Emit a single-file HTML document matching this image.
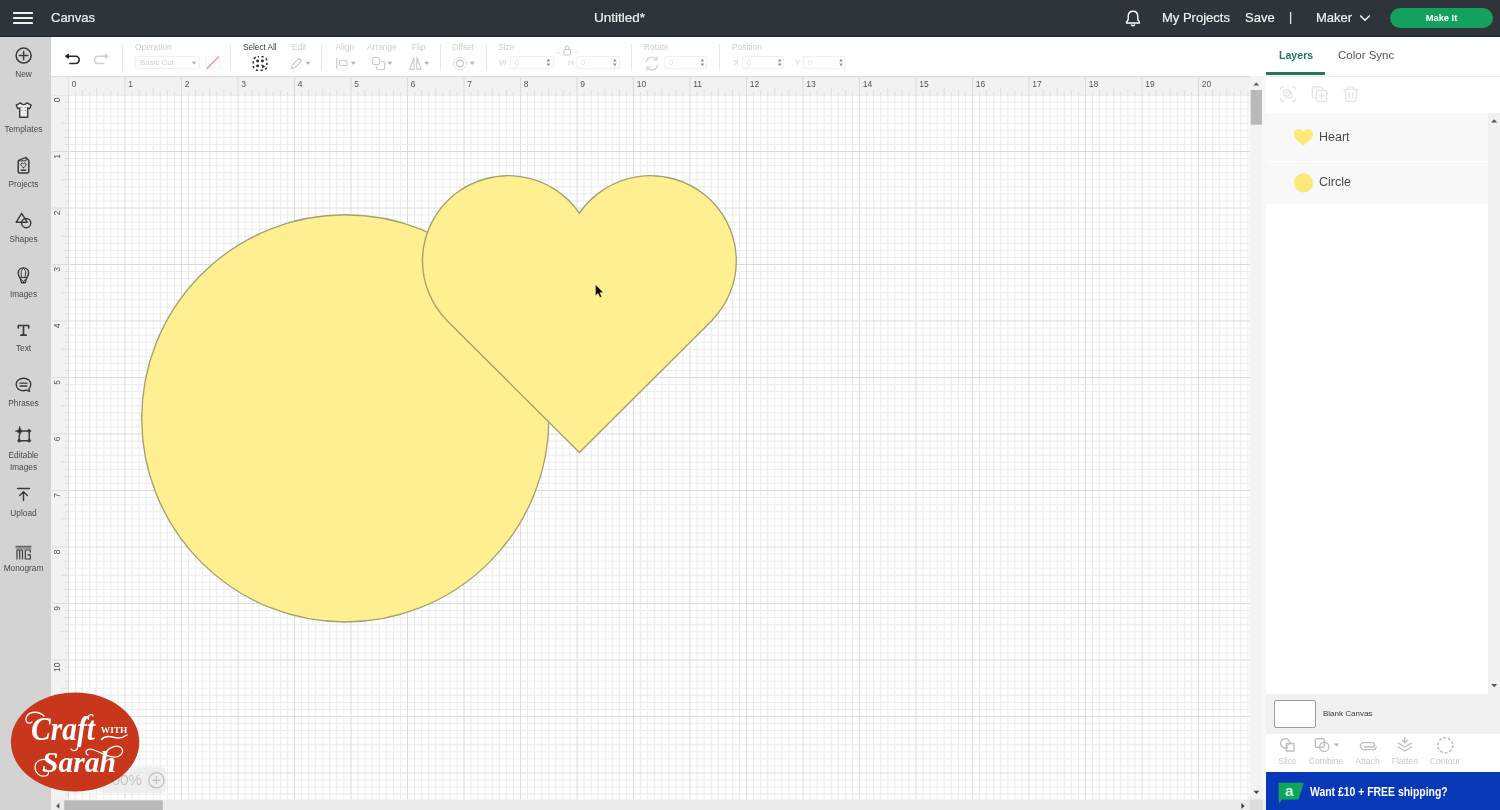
<!DOCTYPE html>
<html lang="en">
<head>
<meta charset="utf-8">
<title>Cricut Design Space - Canvas</title>
<style>
*{box-sizing:border-box;margin:0;padding:0}
html,body{width:1500px;height:810px;overflow:hidden;background:#fff;font-family:"Liberation Sans",sans-serif;}
#app{will-change:transform;position:relative;width:1500px;height:810px;overflow:hidden;background:#fff}
.abs{position:absolute}
#topbar{left:0;top:0;width:1500px;height:37.500px;background:#2f333a;color:#fff;border-bottom:2.500px solid #212328}
#topbar .t{-webkit-text-stroke:.2px #f1f1f2;position:absolute;top:0;height:36px;line-height:35.500px;font-size:13px;color:#f1f1f2;white-space:nowrap}
#makeit{position:absolute;left:1390px;top:8.300px;width:103px;height:20px;border-radius:10px;background:#14a05e;color:#fff;font-size:9.300px;font-weight:bold;text-align:center;line-height:20px}
#sidebar{left:0;top:37px;width:51px;height:773px;background:#d3d3d3}
.sb{position:absolute;left:0;width:47px;text-align:center;font-size:8.300px;color:#4a4a4a;line-height:12px}
.sbi{position:absolute;left:13px;width:21px;height:21px}
#toolbar{left:51px;top:37px;width:1215px;height:39px;background:#fff}
.tl{position:absolute;margin-top:.400px;top:6px;font-size:8.4px;color:#cfcfcf;white-space:nowrap;line-height:9px}
.sep{position:absolute;top:44px;width:1px;height:27px;background:#e6e6e6}
.inp{position:absolute;top:56px;height:13px;border:1px solid #f0f0f0;border-radius:2px;background:#fff}
.inl{position:absolute;top:58px;font-size:7.9px;color:#cfcfcf;line-height:9px}
#rulers{left:0;top:0;width:1500px;height:810px;pointer-events:none}
#panel{left:1266px;top:37px;width:234px;height:773px;background:#fff}
.lyr{position:absolute;left:0;width:222px;background:#f8f8f8}
.lyr span{position:absolute;left:53px;font-size:12.500px;color:#4a4a4a;line-height:16px}
.act{position:absolute;top:756.300px;font-size:8.600px;color:#c9c9c9;text-align:center;width:44px;line-height:10px}
</style>
</head>
<body>
<div id="app">

<!-- canvas + rulers + shapes (single svg) -->
<svg id="rulers" class="abs" width="1500" height="810" viewBox="0 0 1500 810" font-family="Liberation Sans, sans-serif">
<rect x="51" y="76" width="1215" height="734" fill="#fff"/>
<path d="M75.56 94V799.5M82.62 94V799.5M89.69 94V799.5M96.75 94V799.5M103.81 94V799.5M110.88 94V799.5M117.94 94V799.5M132.06 94V799.5M139.12 94V799.5M146.19 94V799.5M153.25 94V799.5M160.31 94V799.5M167.38 94V799.5M174.44 94V799.5M188.56 94V799.5M195.62 94V799.5M202.69 94V799.5M209.75 94V799.5M216.81 94V799.5M223.88 94V799.5M230.94 94V799.5M245.06 94V799.5M252.12 94V799.5M259.19 94V799.5M266.25 94V799.5M273.31 94V799.5M280.38 94V799.5M287.44 94V799.5M301.56 94V799.5M308.62 94V799.5M315.69 94V799.5M322.75 94V799.5M329.81 94V799.5M336.88 94V799.5M343.94 94V799.5M358.06 94V799.5M365.12 94V799.5M372.19 94V799.5M379.25 94V799.5M386.31 94V799.5M393.38 94V799.5M400.44 94V799.5M414.56 94V799.5M421.62 94V799.5M428.69 94V799.5M435.75 94V799.5M442.81 94V799.5M449.88 94V799.5M456.94 94V799.5M471.06 94V799.5M478.12 94V799.5M485.19 94V799.5M492.25 94V799.5M499.31 94V799.5M506.38 94V799.5M513.44 94V799.5M527.56 94V799.5M534.62 94V799.5M541.69 94V799.5M548.75 94V799.5M555.81 94V799.5M562.88 94V799.5M569.94 94V799.5M584.06 94V799.5M591.12 94V799.5M598.19 94V799.5M605.25 94V799.5M612.31 94V799.5M619.38 94V799.5M626.44 94V799.5M640.56 94V799.5M647.62 94V799.5M654.69 94V799.5M661.75 94V799.5M668.81 94V799.5M675.88 94V799.5M682.94 94V799.5M697.06 94V799.5M704.12 94V799.5M711.19 94V799.5M718.25 94V799.5M725.31 94V799.5M732.38 94V799.5M739.44 94V799.5M753.56 94V799.5M760.62 94V799.5M767.69 94V799.5M774.75 94V799.5M781.81 94V799.5M788.88 94V799.5M795.94 94V799.5M810.06 94V799.5M817.12 94V799.5M824.19 94V799.5M831.25 94V799.5M838.31 94V799.5M845.38 94V799.5M852.44 94V799.5M866.56 94V799.5M873.62 94V799.5M880.69 94V799.5M887.75 94V799.5M894.81 94V799.5M901.88 94V799.5M908.94 94V799.5M923.06 94V799.5M930.12 94V799.5M937.19 94V799.5M944.25 94V799.5M951.31 94V799.5M958.38 94V799.5M965.44 94V799.5M979.56 94V799.5M986.62 94V799.5M993.69 94V799.5M1000.75 94V799.5M1007.81 94V799.5M1014.88 94V799.5M1021.94 94V799.5M1036.06 94V799.5M1043.12 94V799.5M1050.19 94V799.5M1057.25 94V799.5M1064.31 94V799.5M1071.38 94V799.5M1078.44 94V799.5M1092.56 94V799.5M1099.62 94V799.5M1106.69 94V799.5M1113.75 94V799.5M1120.81 94V799.5M1127.88 94V799.5M1134.94 94V799.5M1149.06 94V799.5M1156.12 94V799.5M1163.19 94V799.5M1170.25 94V799.5M1177.31 94V799.5M1184.38 94V799.5M1191.44 94V799.5M1205.56 94V799.5M1212.62 94V799.5M1219.69 94V799.5M1226.75 94V799.5M1233.81 94V799.5M1240.88 94V799.5M1247.94 94V799.5M68 102.06H1250M68 109.12H1250M68 116.19H1250M68 123.25H1250M68 130.31H1250M68 137.38H1250M68 144.44H1250M68 158.56H1250M68 165.62H1250M68 172.69H1250M68 179.75H1250M68 186.81H1250M68 193.88H1250M68 200.94H1250M68 215.06H1250M68 222.12H1250M68 229.19H1250M68 236.25H1250M68 243.31H1250M68 250.38H1250M68 257.44H1250M68 271.56H1250M68 278.62H1250M68 285.69H1250M68 292.75H1250M68 299.81H1250M68 306.88H1250M68 313.94H1250M68 328.06H1250M68 335.12H1250M68 342.19H1250M68 349.25H1250M68 356.31H1250M68 363.38H1250M68 370.44H1250M68 384.56H1250M68 391.62H1250M68 398.69H1250M68 405.75H1250M68 412.81H1250M68 419.88H1250M68 426.94H1250M68 441.06H1250M68 448.12H1250M68 455.19H1250M68 462.25H1250M68 469.31H1250M68 476.38H1250M68 483.44H1250M68 497.56H1250M68 504.62H1250M68 511.69H1250M68 518.75H1250M68 525.81H1250M68 532.88H1250M68 539.94H1250M68 554.06H1250M68 561.12H1250M68 568.19H1250M68 575.25H1250M68 582.31H1250M68 589.38H1250M68 596.44H1250M68 610.56H1250M68 617.62H1250M68 624.69H1250M68 631.75H1250M68 638.81H1250M68 645.88H1250M68 652.94H1250M68 667.06H1250M68 674.12H1250M68 681.19H1250M68 688.25H1250M68 695.31H1250M68 702.38H1250M68 709.44H1250M68 723.56H1250M68 730.62H1250M68 737.69H1250M68 744.75H1250M68 751.81H1250M68 758.88H1250M68 765.94H1250M68 780.06H1250M68 787.12H1250M68 794.19H1250" stroke="#ececec" stroke-width="1" fill="none"/>
<path d="M68.50 94V799.5M125.00 94V799.5M181.50 94V799.5M238.00 94V799.5M294.50 94V799.5M351.00 94V799.5M407.50 94V799.5M464.00 94V799.5M520.50 94V799.5M577.00 94V799.5M633.50 94V799.5M690.00 94V799.5M746.50 94V799.5M803.00 94V799.5M859.50 94V799.5M916.00 94V799.5M972.50 94V799.5M1029.00 94V799.5M1085.50 94V799.5M1142.00 94V799.5M1198.50 94V799.5M68 95.00H1250M68 151.50H1250M68 208.00H1250M68 264.50H1250M68 321.00H1250M68 377.50H1250M68 434.00H1250M68 490.50H1250M68 547.00H1250M68 603.50H1250M68 660.00H1250M68 716.50H1250M68 773.00H1250" stroke="#dcdcdc" stroke-width="1" fill="none"/>
<!-- circle -->
<circle cx="345.300" cy="418.400" r="203.600" fill="#feef90" stroke="#a6a06e" stroke-width="1.350"/>
<!-- heart -->
<path d="M579.40 452.52L447.42 320.93A85.8 85.2 0 1 1 579.40 213.21A85.8 85.2 0 1 1 711.38 320.93Z" fill="#feef90" stroke="#a6a06e" stroke-width="1.350" stroke-linejoin="miter"/>
<!-- ruler backgrounds -->
<rect x="51" y="76" width="1199" height="19" fill="#f2f2f2"/>
<rect x="51" y="76" width="17" height="724" fill="#f2f2f2"/>
<rect x="51" y="76" width="1215" height="1.5" fill="#dedede"/>
<line x1="68.5" y1="77" x2="68.5" y2="95" stroke="#dcdcdc" stroke-width="1"/>
<text x="71.7" y="86.8" font-size="8.5" fill="#555">0</text>
<line x1="75.6" y1="92" x2="75.6" y2="95" stroke="#dcdcdc" stroke-width="1"/>
<line x1="82.6" y1="90.5" x2="82.6" y2="95" stroke="#dcdcdc" stroke-width="1"/>
<line x1="89.7" y1="92" x2="89.7" y2="95" stroke="#dcdcdc" stroke-width="1"/>
<line x1="96.8" y1="88" x2="96.8" y2="95" stroke="#dcdcdc" stroke-width="1"/>
<line x1="103.8" y1="92" x2="103.8" y2="95" stroke="#dcdcdc" stroke-width="1"/>
<line x1="110.9" y1="90.5" x2="110.9" y2="95" stroke="#dcdcdc" stroke-width="1"/>
<line x1="117.9" y1="92" x2="117.9" y2="95" stroke="#dcdcdc" stroke-width="1"/>
<line x1="125.0" y1="77" x2="125.0" y2="95" stroke="#dcdcdc" stroke-width="1"/>
<text x="128.2" y="86.8" font-size="8.5" fill="#555">1</text>
<line x1="132.1" y1="92" x2="132.1" y2="95" stroke="#dcdcdc" stroke-width="1"/>
<line x1="139.1" y1="90.5" x2="139.1" y2="95" stroke="#dcdcdc" stroke-width="1"/>
<line x1="146.2" y1="92" x2="146.2" y2="95" stroke="#dcdcdc" stroke-width="1"/>
<line x1="153.2" y1="88" x2="153.2" y2="95" stroke="#dcdcdc" stroke-width="1"/>
<line x1="160.3" y1="92" x2="160.3" y2="95" stroke="#dcdcdc" stroke-width="1"/>
<line x1="167.4" y1="90.5" x2="167.4" y2="95" stroke="#dcdcdc" stroke-width="1"/>
<line x1="174.4" y1="92" x2="174.4" y2="95" stroke="#dcdcdc" stroke-width="1"/>
<line x1="181.5" y1="77" x2="181.5" y2="95" stroke="#dcdcdc" stroke-width="1"/>
<text x="184.7" y="86.8" font-size="8.5" fill="#555">2</text>
<line x1="188.6" y1="92" x2="188.6" y2="95" stroke="#dcdcdc" stroke-width="1"/>
<line x1="195.6" y1="90.5" x2="195.6" y2="95" stroke="#dcdcdc" stroke-width="1"/>
<line x1="202.7" y1="92" x2="202.7" y2="95" stroke="#dcdcdc" stroke-width="1"/>
<line x1="209.8" y1="88" x2="209.8" y2="95" stroke="#dcdcdc" stroke-width="1"/>
<line x1="216.8" y1="92" x2="216.8" y2="95" stroke="#dcdcdc" stroke-width="1"/>
<line x1="223.9" y1="90.5" x2="223.9" y2="95" stroke="#dcdcdc" stroke-width="1"/>
<line x1="230.9" y1="92" x2="230.9" y2="95" stroke="#dcdcdc" stroke-width="1"/>
<line x1="238.0" y1="77" x2="238.0" y2="95" stroke="#dcdcdc" stroke-width="1"/>
<text x="241.2" y="86.8" font-size="8.5" fill="#555">3</text>
<line x1="245.1" y1="92" x2="245.1" y2="95" stroke="#dcdcdc" stroke-width="1"/>
<line x1="252.1" y1="90.5" x2="252.1" y2="95" stroke="#dcdcdc" stroke-width="1"/>
<line x1="259.2" y1="92" x2="259.2" y2="95" stroke="#dcdcdc" stroke-width="1"/>
<line x1="266.2" y1="88" x2="266.2" y2="95" stroke="#dcdcdc" stroke-width="1"/>
<line x1="273.3" y1="92" x2="273.3" y2="95" stroke="#dcdcdc" stroke-width="1"/>
<line x1="280.4" y1="90.5" x2="280.4" y2="95" stroke="#dcdcdc" stroke-width="1"/>
<line x1="287.4" y1="92" x2="287.4" y2="95" stroke="#dcdcdc" stroke-width="1"/>
<line x1="294.5" y1="77" x2="294.5" y2="95" stroke="#dcdcdc" stroke-width="1"/>
<text x="297.7" y="86.8" font-size="8.5" fill="#555">4</text>
<line x1="301.6" y1="92" x2="301.6" y2="95" stroke="#dcdcdc" stroke-width="1"/>
<line x1="308.6" y1="90.5" x2="308.6" y2="95" stroke="#dcdcdc" stroke-width="1"/>
<line x1="315.7" y1="92" x2="315.7" y2="95" stroke="#dcdcdc" stroke-width="1"/>
<line x1="322.8" y1="88" x2="322.8" y2="95" stroke="#dcdcdc" stroke-width="1"/>
<line x1="329.8" y1="92" x2="329.8" y2="95" stroke="#dcdcdc" stroke-width="1"/>
<line x1="336.9" y1="90.5" x2="336.9" y2="95" stroke="#dcdcdc" stroke-width="1"/>
<line x1="343.9" y1="92" x2="343.9" y2="95" stroke="#dcdcdc" stroke-width="1"/>
<line x1="351.0" y1="77" x2="351.0" y2="95" stroke="#dcdcdc" stroke-width="1"/>
<text x="354.2" y="86.8" font-size="8.5" fill="#555">5</text>
<line x1="358.1" y1="92" x2="358.1" y2="95" stroke="#dcdcdc" stroke-width="1"/>
<line x1="365.1" y1="90.5" x2="365.1" y2="95" stroke="#dcdcdc" stroke-width="1"/>
<line x1="372.2" y1="92" x2="372.2" y2="95" stroke="#dcdcdc" stroke-width="1"/>
<line x1="379.2" y1="88" x2="379.2" y2="95" stroke="#dcdcdc" stroke-width="1"/>
<line x1="386.3" y1="92" x2="386.3" y2="95" stroke="#dcdcdc" stroke-width="1"/>
<line x1="393.4" y1="90.5" x2="393.4" y2="95" stroke="#dcdcdc" stroke-width="1"/>
<line x1="400.4" y1="92" x2="400.4" y2="95" stroke="#dcdcdc" stroke-width="1"/>
<line x1="407.5" y1="77" x2="407.5" y2="95" stroke="#dcdcdc" stroke-width="1"/>
<text x="410.7" y="86.8" font-size="8.5" fill="#555">6</text>
<line x1="414.6" y1="92" x2="414.6" y2="95" stroke="#dcdcdc" stroke-width="1"/>
<line x1="421.6" y1="90.5" x2="421.6" y2="95" stroke="#dcdcdc" stroke-width="1"/>
<line x1="428.7" y1="92" x2="428.7" y2="95" stroke="#dcdcdc" stroke-width="1"/>
<line x1="435.8" y1="88" x2="435.8" y2="95" stroke="#dcdcdc" stroke-width="1"/>
<line x1="442.8" y1="92" x2="442.8" y2="95" stroke="#dcdcdc" stroke-width="1"/>
<line x1="449.9" y1="90.5" x2="449.9" y2="95" stroke="#dcdcdc" stroke-width="1"/>
<line x1="456.9" y1="92" x2="456.9" y2="95" stroke="#dcdcdc" stroke-width="1"/>
<line x1="464.0" y1="77" x2="464.0" y2="95" stroke="#dcdcdc" stroke-width="1"/>
<text x="467.2" y="86.8" font-size="8.5" fill="#555">7</text>
<line x1="471.1" y1="92" x2="471.1" y2="95" stroke="#dcdcdc" stroke-width="1"/>
<line x1="478.1" y1="90.5" x2="478.1" y2="95" stroke="#dcdcdc" stroke-width="1"/>
<line x1="485.2" y1="92" x2="485.2" y2="95" stroke="#dcdcdc" stroke-width="1"/>
<line x1="492.2" y1="88" x2="492.2" y2="95" stroke="#dcdcdc" stroke-width="1"/>
<line x1="499.3" y1="92" x2="499.3" y2="95" stroke="#dcdcdc" stroke-width="1"/>
<line x1="506.4" y1="90.5" x2="506.4" y2="95" stroke="#dcdcdc" stroke-width="1"/>
<line x1="513.4" y1="92" x2="513.4" y2="95" stroke="#dcdcdc" stroke-width="1"/>
<line x1="520.5" y1="77" x2="520.5" y2="95" stroke="#dcdcdc" stroke-width="1"/>
<text x="523.7" y="86.8" font-size="8.5" fill="#555">8</text>
<line x1="527.6" y1="92" x2="527.6" y2="95" stroke="#dcdcdc" stroke-width="1"/>
<line x1="534.6" y1="90.5" x2="534.6" y2="95" stroke="#dcdcdc" stroke-width="1"/>
<line x1="541.7" y1="92" x2="541.7" y2="95" stroke="#dcdcdc" stroke-width="1"/>
<line x1="548.8" y1="88" x2="548.8" y2="95" stroke="#dcdcdc" stroke-width="1"/>
<line x1="555.8" y1="92" x2="555.8" y2="95" stroke="#dcdcdc" stroke-width="1"/>
<line x1="562.9" y1="90.5" x2="562.9" y2="95" stroke="#dcdcdc" stroke-width="1"/>
<line x1="569.9" y1="92" x2="569.9" y2="95" stroke="#dcdcdc" stroke-width="1"/>
<line x1="577.0" y1="77" x2="577.0" y2="95" stroke="#dcdcdc" stroke-width="1"/>
<text x="580.2" y="86.8" font-size="8.5" fill="#555">9</text>
<line x1="584.1" y1="92" x2="584.1" y2="95" stroke="#dcdcdc" stroke-width="1"/>
<line x1="591.1" y1="90.5" x2="591.1" y2="95" stroke="#dcdcdc" stroke-width="1"/>
<line x1="598.2" y1="92" x2="598.2" y2="95" stroke="#dcdcdc" stroke-width="1"/>
<line x1="605.2" y1="88" x2="605.2" y2="95" stroke="#dcdcdc" stroke-width="1"/>
<line x1="612.3" y1="92" x2="612.3" y2="95" stroke="#dcdcdc" stroke-width="1"/>
<line x1="619.4" y1="90.5" x2="619.4" y2="95" stroke="#dcdcdc" stroke-width="1"/>
<line x1="626.4" y1="92" x2="626.4" y2="95" stroke="#dcdcdc" stroke-width="1"/>
<line x1="633.5" y1="77" x2="633.5" y2="95" stroke="#dcdcdc" stroke-width="1"/>
<text x="636.7" y="86.8" font-size="8.5" fill="#555">10</text>
<line x1="640.6" y1="92" x2="640.6" y2="95" stroke="#dcdcdc" stroke-width="1"/>
<line x1="647.6" y1="90.5" x2="647.6" y2="95" stroke="#dcdcdc" stroke-width="1"/>
<line x1="654.7" y1="92" x2="654.7" y2="95" stroke="#dcdcdc" stroke-width="1"/>
<line x1="661.8" y1="88" x2="661.8" y2="95" stroke="#dcdcdc" stroke-width="1"/>
<line x1="668.8" y1="92" x2="668.8" y2="95" stroke="#dcdcdc" stroke-width="1"/>
<line x1="675.9" y1="90.5" x2="675.9" y2="95" stroke="#dcdcdc" stroke-width="1"/>
<line x1="682.9" y1="92" x2="682.9" y2="95" stroke="#dcdcdc" stroke-width="1"/>
<line x1="690.0" y1="77" x2="690.0" y2="95" stroke="#dcdcdc" stroke-width="1"/>
<text x="693.2" y="86.8" font-size="8.5" fill="#555">11</text>
<line x1="697.1" y1="92" x2="697.1" y2="95" stroke="#dcdcdc" stroke-width="1"/>
<line x1="704.1" y1="90.5" x2="704.1" y2="95" stroke="#dcdcdc" stroke-width="1"/>
<line x1="711.2" y1="92" x2="711.2" y2="95" stroke="#dcdcdc" stroke-width="1"/>
<line x1="718.2" y1="88" x2="718.2" y2="95" stroke="#dcdcdc" stroke-width="1"/>
<line x1="725.3" y1="92" x2="725.3" y2="95" stroke="#dcdcdc" stroke-width="1"/>
<line x1="732.4" y1="90.5" x2="732.4" y2="95" stroke="#dcdcdc" stroke-width="1"/>
<line x1="739.4" y1="92" x2="739.4" y2="95" stroke="#dcdcdc" stroke-width="1"/>
<line x1="746.5" y1="77" x2="746.5" y2="95" stroke="#dcdcdc" stroke-width="1"/>
<text x="749.7" y="86.8" font-size="8.5" fill="#555">12</text>
<line x1="753.6" y1="92" x2="753.6" y2="95" stroke="#dcdcdc" stroke-width="1"/>
<line x1="760.6" y1="90.5" x2="760.6" y2="95" stroke="#dcdcdc" stroke-width="1"/>
<line x1="767.7" y1="92" x2="767.7" y2="95" stroke="#dcdcdc" stroke-width="1"/>
<line x1="774.8" y1="88" x2="774.8" y2="95" stroke="#dcdcdc" stroke-width="1"/>
<line x1="781.8" y1="92" x2="781.8" y2="95" stroke="#dcdcdc" stroke-width="1"/>
<line x1="788.9" y1="90.5" x2="788.9" y2="95" stroke="#dcdcdc" stroke-width="1"/>
<line x1="795.9" y1="92" x2="795.9" y2="95" stroke="#dcdcdc" stroke-width="1"/>
<line x1="803.0" y1="77" x2="803.0" y2="95" stroke="#dcdcdc" stroke-width="1"/>
<text x="806.2" y="86.8" font-size="8.5" fill="#555">13</text>
<line x1="810.1" y1="92" x2="810.1" y2="95" stroke="#dcdcdc" stroke-width="1"/>
<line x1="817.1" y1="90.5" x2="817.1" y2="95" stroke="#dcdcdc" stroke-width="1"/>
<line x1="824.2" y1="92" x2="824.2" y2="95" stroke="#dcdcdc" stroke-width="1"/>
<line x1="831.2" y1="88" x2="831.2" y2="95" stroke="#dcdcdc" stroke-width="1"/>
<line x1="838.3" y1="92" x2="838.3" y2="95" stroke="#dcdcdc" stroke-width="1"/>
<line x1="845.4" y1="90.5" x2="845.4" y2="95" stroke="#dcdcdc" stroke-width="1"/>
<line x1="852.4" y1="92" x2="852.4" y2="95" stroke="#dcdcdc" stroke-width="1"/>
<line x1="859.5" y1="77" x2="859.5" y2="95" stroke="#dcdcdc" stroke-width="1"/>
<text x="862.7" y="86.8" font-size="8.5" fill="#555">14</text>
<line x1="866.6" y1="92" x2="866.6" y2="95" stroke="#dcdcdc" stroke-width="1"/>
<line x1="873.6" y1="90.5" x2="873.6" y2="95" stroke="#dcdcdc" stroke-width="1"/>
<line x1="880.7" y1="92" x2="880.7" y2="95" stroke="#dcdcdc" stroke-width="1"/>
<line x1="887.8" y1="88" x2="887.8" y2="95" stroke="#dcdcdc" stroke-width="1"/>
<line x1="894.8" y1="92" x2="894.8" y2="95" stroke="#dcdcdc" stroke-width="1"/>
<line x1="901.9" y1="90.5" x2="901.9" y2="95" stroke="#dcdcdc" stroke-width="1"/>
<line x1="908.9" y1="92" x2="908.9" y2="95" stroke="#dcdcdc" stroke-width="1"/>
<line x1="916.0" y1="77" x2="916.0" y2="95" stroke="#dcdcdc" stroke-width="1"/>
<text x="919.2" y="86.8" font-size="8.5" fill="#555">15</text>
<line x1="923.1" y1="92" x2="923.1" y2="95" stroke="#dcdcdc" stroke-width="1"/>
<line x1="930.1" y1="90.5" x2="930.1" y2="95" stroke="#dcdcdc" stroke-width="1"/>
<line x1="937.2" y1="92" x2="937.2" y2="95" stroke="#dcdcdc" stroke-width="1"/>
<line x1="944.2" y1="88" x2="944.2" y2="95" stroke="#dcdcdc" stroke-width="1"/>
<line x1="951.3" y1="92" x2="951.3" y2="95" stroke="#dcdcdc" stroke-width="1"/>
<line x1="958.4" y1="90.5" x2="958.4" y2="95" stroke="#dcdcdc" stroke-width="1"/>
<line x1="965.4" y1="92" x2="965.4" y2="95" stroke="#dcdcdc" stroke-width="1"/>
<line x1="972.5" y1="77" x2="972.5" y2="95" stroke="#dcdcdc" stroke-width="1"/>
<text x="975.7" y="86.8" font-size="8.5" fill="#555">16</text>
<line x1="979.6" y1="92" x2="979.6" y2="95" stroke="#dcdcdc" stroke-width="1"/>
<line x1="986.6" y1="90.5" x2="986.6" y2="95" stroke="#dcdcdc" stroke-width="1"/>
<line x1="993.7" y1="92" x2="993.7" y2="95" stroke="#dcdcdc" stroke-width="1"/>
<line x1="1000.8" y1="88" x2="1000.8" y2="95" stroke="#dcdcdc" stroke-width="1"/>
<line x1="1007.8" y1="92" x2="1007.8" y2="95" stroke="#dcdcdc" stroke-width="1"/>
<line x1="1014.9" y1="90.5" x2="1014.9" y2="95" stroke="#dcdcdc" stroke-width="1"/>
<line x1="1021.9" y1="92" x2="1021.9" y2="95" stroke="#dcdcdc" stroke-width="1"/>
<line x1="1029.0" y1="77" x2="1029.0" y2="95" stroke="#dcdcdc" stroke-width="1"/>
<text x="1032.2" y="86.8" font-size="8.5" fill="#555">17</text>
<line x1="1036.1" y1="92" x2="1036.1" y2="95" stroke="#dcdcdc" stroke-width="1"/>
<line x1="1043.1" y1="90.5" x2="1043.1" y2="95" stroke="#dcdcdc" stroke-width="1"/>
<line x1="1050.2" y1="92" x2="1050.2" y2="95" stroke="#dcdcdc" stroke-width="1"/>
<line x1="1057.2" y1="88" x2="1057.2" y2="95" stroke="#dcdcdc" stroke-width="1"/>
<line x1="1064.3" y1="92" x2="1064.3" y2="95" stroke="#dcdcdc" stroke-width="1"/>
<line x1="1071.4" y1="90.5" x2="1071.4" y2="95" stroke="#dcdcdc" stroke-width="1"/>
<line x1="1078.4" y1="92" x2="1078.4" y2="95" stroke="#dcdcdc" stroke-width="1"/>
<line x1="1085.5" y1="77" x2="1085.5" y2="95" stroke="#dcdcdc" stroke-width="1"/>
<text x="1088.7" y="86.8" font-size="8.5" fill="#555">18</text>
<line x1="1092.6" y1="92" x2="1092.6" y2="95" stroke="#dcdcdc" stroke-width="1"/>
<line x1="1099.6" y1="90.5" x2="1099.6" y2="95" stroke="#dcdcdc" stroke-width="1"/>
<line x1="1106.7" y1="92" x2="1106.7" y2="95" stroke="#dcdcdc" stroke-width="1"/>
<line x1="1113.8" y1="88" x2="1113.8" y2="95" stroke="#dcdcdc" stroke-width="1"/>
<line x1="1120.8" y1="92" x2="1120.8" y2="95" stroke="#dcdcdc" stroke-width="1"/>
<line x1="1127.9" y1="90.5" x2="1127.9" y2="95" stroke="#dcdcdc" stroke-width="1"/>
<line x1="1134.9" y1="92" x2="1134.9" y2="95" stroke="#dcdcdc" stroke-width="1"/>
<line x1="1142.0" y1="77" x2="1142.0" y2="95" stroke="#dcdcdc" stroke-width="1"/>
<text x="1145.2" y="86.8" font-size="8.5" fill="#555">19</text>
<line x1="1149.1" y1="92" x2="1149.1" y2="95" stroke="#dcdcdc" stroke-width="1"/>
<line x1="1156.1" y1="90.5" x2="1156.1" y2="95" stroke="#dcdcdc" stroke-width="1"/>
<line x1="1163.2" y1="92" x2="1163.2" y2="95" stroke="#dcdcdc" stroke-width="1"/>
<line x1="1170.2" y1="88" x2="1170.2" y2="95" stroke="#dcdcdc" stroke-width="1"/>
<line x1="1177.3" y1="92" x2="1177.3" y2="95" stroke="#dcdcdc" stroke-width="1"/>
<line x1="1184.4" y1="90.5" x2="1184.4" y2="95" stroke="#dcdcdc" stroke-width="1"/>
<line x1="1191.4" y1="92" x2="1191.4" y2="95" stroke="#dcdcdc" stroke-width="1"/>
<line x1="1198.5" y1="77" x2="1198.5" y2="95" stroke="#dcdcdc" stroke-width="1"/>
<text x="1201.7" y="86.8" font-size="8.5" fill="#555">20</text>
<line x1="1205.6" y1="92" x2="1205.6" y2="95" stroke="#dcdcdc" stroke-width="1"/>
<line x1="1212.6" y1="90.5" x2="1212.6" y2="95" stroke="#dcdcdc" stroke-width="1"/>
<line x1="1219.7" y1="92" x2="1219.7" y2="95" stroke="#dcdcdc" stroke-width="1"/>
<line x1="1226.8" y1="88" x2="1226.8" y2="95" stroke="#dcdcdc" stroke-width="1"/>
<line x1="1233.8" y1="92" x2="1233.8" y2="95" stroke="#dcdcdc" stroke-width="1"/>
<line x1="1240.9" y1="90.5" x2="1240.9" y2="95" stroke="#dcdcdc" stroke-width="1"/>
<line x1="1247.9" y1="92" x2="1247.9" y2="95" stroke="#dcdcdc" stroke-width="1"/>
<line x1="52" y1="95.0" x2="68" y2="95.0" stroke="#dcdcdc" stroke-width="1"/>
<text transform="translate(59.7,97.5) rotate(-90)" text-anchor="end" font-size="8.5" fill="#555">0</text>
<line x1="65" y1="102.1" x2="68" y2="102.1" stroke="#dcdcdc" stroke-width="1"/>
<line x1="63.5" y1="109.1" x2="68" y2="109.1" stroke="#dcdcdc" stroke-width="1"/>
<line x1="65" y1="116.2" x2="68" y2="116.2" stroke="#dcdcdc" stroke-width="1"/>
<line x1="61" y1="123.2" x2="68" y2="123.2" stroke="#dcdcdc" stroke-width="1"/>
<line x1="65" y1="130.3" x2="68" y2="130.3" stroke="#dcdcdc" stroke-width="1"/>
<line x1="63.5" y1="137.4" x2="68" y2="137.4" stroke="#dcdcdc" stroke-width="1"/>
<line x1="65" y1="144.4" x2="68" y2="144.4" stroke="#dcdcdc" stroke-width="1"/>
<line x1="52" y1="151.5" x2="68" y2="151.5" stroke="#dcdcdc" stroke-width="1"/>
<text transform="translate(59.7,154.0) rotate(-90)" text-anchor="end" font-size="8.5" fill="#555">1</text>
<line x1="65" y1="158.6" x2="68" y2="158.6" stroke="#dcdcdc" stroke-width="1"/>
<line x1="63.5" y1="165.6" x2="68" y2="165.6" stroke="#dcdcdc" stroke-width="1"/>
<line x1="65" y1="172.7" x2="68" y2="172.7" stroke="#dcdcdc" stroke-width="1"/>
<line x1="61" y1="179.8" x2="68" y2="179.8" stroke="#dcdcdc" stroke-width="1"/>
<line x1="65" y1="186.8" x2="68" y2="186.8" stroke="#dcdcdc" stroke-width="1"/>
<line x1="63.5" y1="193.9" x2="68" y2="193.9" stroke="#dcdcdc" stroke-width="1"/>
<line x1="65" y1="200.9" x2="68" y2="200.9" stroke="#dcdcdc" stroke-width="1"/>
<line x1="52" y1="208.0" x2="68" y2="208.0" stroke="#dcdcdc" stroke-width="1"/>
<text transform="translate(59.7,210.5) rotate(-90)" text-anchor="end" font-size="8.5" fill="#555">2</text>
<line x1="65" y1="215.1" x2="68" y2="215.1" stroke="#dcdcdc" stroke-width="1"/>
<line x1="63.5" y1="222.1" x2="68" y2="222.1" stroke="#dcdcdc" stroke-width="1"/>
<line x1="65" y1="229.2" x2="68" y2="229.2" stroke="#dcdcdc" stroke-width="1"/>
<line x1="61" y1="236.2" x2="68" y2="236.2" stroke="#dcdcdc" stroke-width="1"/>
<line x1="65" y1="243.3" x2="68" y2="243.3" stroke="#dcdcdc" stroke-width="1"/>
<line x1="63.5" y1="250.4" x2="68" y2="250.4" stroke="#dcdcdc" stroke-width="1"/>
<line x1="65" y1="257.4" x2="68" y2="257.4" stroke="#dcdcdc" stroke-width="1"/>
<line x1="52" y1="264.5" x2="68" y2="264.5" stroke="#dcdcdc" stroke-width="1"/>
<text transform="translate(59.7,267.0) rotate(-90)" text-anchor="end" font-size="8.5" fill="#555">3</text>
<line x1="65" y1="271.6" x2="68" y2="271.6" stroke="#dcdcdc" stroke-width="1"/>
<line x1="63.5" y1="278.6" x2="68" y2="278.6" stroke="#dcdcdc" stroke-width="1"/>
<line x1="65" y1="285.7" x2="68" y2="285.7" stroke="#dcdcdc" stroke-width="1"/>
<line x1="61" y1="292.8" x2="68" y2="292.8" stroke="#dcdcdc" stroke-width="1"/>
<line x1="65" y1="299.8" x2="68" y2="299.8" stroke="#dcdcdc" stroke-width="1"/>
<line x1="63.5" y1="306.9" x2="68" y2="306.9" stroke="#dcdcdc" stroke-width="1"/>
<line x1="65" y1="313.9" x2="68" y2="313.9" stroke="#dcdcdc" stroke-width="1"/>
<line x1="52" y1="321.0" x2="68" y2="321.0" stroke="#dcdcdc" stroke-width="1"/>
<text transform="translate(59.7,323.5) rotate(-90)" text-anchor="end" font-size="8.5" fill="#555">4</text>
<line x1="65" y1="328.1" x2="68" y2="328.1" stroke="#dcdcdc" stroke-width="1"/>
<line x1="63.5" y1="335.1" x2="68" y2="335.1" stroke="#dcdcdc" stroke-width="1"/>
<line x1="65" y1="342.2" x2="68" y2="342.2" stroke="#dcdcdc" stroke-width="1"/>
<line x1="61" y1="349.2" x2="68" y2="349.2" stroke="#dcdcdc" stroke-width="1"/>
<line x1="65" y1="356.3" x2="68" y2="356.3" stroke="#dcdcdc" stroke-width="1"/>
<line x1="63.5" y1="363.4" x2="68" y2="363.4" stroke="#dcdcdc" stroke-width="1"/>
<line x1="65" y1="370.4" x2="68" y2="370.4" stroke="#dcdcdc" stroke-width="1"/>
<line x1="52" y1="377.5" x2="68" y2="377.5" stroke="#dcdcdc" stroke-width="1"/>
<text transform="translate(59.7,380.0) rotate(-90)" text-anchor="end" font-size="8.5" fill="#555">5</text>
<line x1="65" y1="384.6" x2="68" y2="384.6" stroke="#dcdcdc" stroke-width="1"/>
<line x1="63.5" y1="391.6" x2="68" y2="391.6" stroke="#dcdcdc" stroke-width="1"/>
<line x1="65" y1="398.7" x2="68" y2="398.7" stroke="#dcdcdc" stroke-width="1"/>
<line x1="61" y1="405.8" x2="68" y2="405.8" stroke="#dcdcdc" stroke-width="1"/>
<line x1="65" y1="412.8" x2="68" y2="412.8" stroke="#dcdcdc" stroke-width="1"/>
<line x1="63.5" y1="419.9" x2="68" y2="419.9" stroke="#dcdcdc" stroke-width="1"/>
<line x1="65" y1="426.9" x2="68" y2="426.9" stroke="#dcdcdc" stroke-width="1"/>
<line x1="52" y1="434.0" x2="68" y2="434.0" stroke="#dcdcdc" stroke-width="1"/>
<text transform="translate(59.7,436.5) rotate(-90)" text-anchor="end" font-size="8.5" fill="#555">6</text>
<line x1="65" y1="441.1" x2="68" y2="441.1" stroke="#dcdcdc" stroke-width="1"/>
<line x1="63.5" y1="448.1" x2="68" y2="448.1" stroke="#dcdcdc" stroke-width="1"/>
<line x1="65" y1="455.2" x2="68" y2="455.2" stroke="#dcdcdc" stroke-width="1"/>
<line x1="61" y1="462.2" x2="68" y2="462.2" stroke="#dcdcdc" stroke-width="1"/>
<line x1="65" y1="469.3" x2="68" y2="469.3" stroke="#dcdcdc" stroke-width="1"/>
<line x1="63.5" y1="476.4" x2="68" y2="476.4" stroke="#dcdcdc" stroke-width="1"/>
<line x1="65" y1="483.4" x2="68" y2="483.4" stroke="#dcdcdc" stroke-width="1"/>
<line x1="52" y1="490.5" x2="68" y2="490.5" stroke="#dcdcdc" stroke-width="1"/>
<text transform="translate(59.7,493.0) rotate(-90)" text-anchor="end" font-size="8.5" fill="#555">7</text>
<line x1="65" y1="497.6" x2="68" y2="497.6" stroke="#dcdcdc" stroke-width="1"/>
<line x1="63.5" y1="504.6" x2="68" y2="504.6" stroke="#dcdcdc" stroke-width="1"/>
<line x1="65" y1="511.7" x2="68" y2="511.7" stroke="#dcdcdc" stroke-width="1"/>
<line x1="61" y1="518.8" x2="68" y2="518.8" stroke="#dcdcdc" stroke-width="1"/>
<line x1="65" y1="525.8" x2="68" y2="525.8" stroke="#dcdcdc" stroke-width="1"/>
<line x1="63.5" y1="532.9" x2="68" y2="532.9" stroke="#dcdcdc" stroke-width="1"/>
<line x1="65" y1="539.9" x2="68" y2="539.9" stroke="#dcdcdc" stroke-width="1"/>
<line x1="52" y1="547.0" x2="68" y2="547.0" stroke="#dcdcdc" stroke-width="1"/>
<text transform="translate(59.7,549.5) rotate(-90)" text-anchor="end" font-size="8.5" fill="#555">8</text>
<line x1="65" y1="554.1" x2="68" y2="554.1" stroke="#dcdcdc" stroke-width="1"/>
<line x1="63.5" y1="561.1" x2="68" y2="561.1" stroke="#dcdcdc" stroke-width="1"/>
<line x1="65" y1="568.2" x2="68" y2="568.2" stroke="#dcdcdc" stroke-width="1"/>
<line x1="61" y1="575.2" x2="68" y2="575.2" stroke="#dcdcdc" stroke-width="1"/>
<line x1="65" y1="582.3" x2="68" y2="582.3" stroke="#dcdcdc" stroke-width="1"/>
<line x1="63.5" y1="589.4" x2="68" y2="589.4" stroke="#dcdcdc" stroke-width="1"/>
<line x1="65" y1="596.4" x2="68" y2="596.4" stroke="#dcdcdc" stroke-width="1"/>
<line x1="52" y1="603.5" x2="68" y2="603.5" stroke="#dcdcdc" stroke-width="1"/>
<text transform="translate(59.7,606.0) rotate(-90)" text-anchor="end" font-size="8.5" fill="#555">9</text>
<line x1="65" y1="610.6" x2="68" y2="610.6" stroke="#dcdcdc" stroke-width="1"/>
<line x1="63.5" y1="617.6" x2="68" y2="617.6" stroke="#dcdcdc" stroke-width="1"/>
<line x1="65" y1="624.7" x2="68" y2="624.7" stroke="#dcdcdc" stroke-width="1"/>
<line x1="61" y1="631.8" x2="68" y2="631.8" stroke="#dcdcdc" stroke-width="1"/>
<line x1="65" y1="638.8" x2="68" y2="638.8" stroke="#dcdcdc" stroke-width="1"/>
<line x1="63.5" y1="645.9" x2="68" y2="645.9" stroke="#dcdcdc" stroke-width="1"/>
<line x1="65" y1="652.9" x2="68" y2="652.9" stroke="#dcdcdc" stroke-width="1"/>
<line x1="52" y1="660.0" x2="68" y2="660.0" stroke="#dcdcdc" stroke-width="1"/>
<text transform="translate(59.7,662.5) rotate(-90)" text-anchor="end" font-size="8.5" fill="#555">10</text>
<line x1="65" y1="667.1" x2="68" y2="667.1" stroke="#dcdcdc" stroke-width="1"/>
<line x1="63.5" y1="674.1" x2="68" y2="674.1" stroke="#dcdcdc" stroke-width="1"/>
<line x1="65" y1="681.2" x2="68" y2="681.2" stroke="#dcdcdc" stroke-width="1"/>
<line x1="61" y1="688.2" x2="68" y2="688.2" stroke="#dcdcdc" stroke-width="1"/>
<line x1="65" y1="695.3" x2="68" y2="695.3" stroke="#dcdcdc" stroke-width="1"/>
<line x1="63.5" y1="702.4" x2="68" y2="702.4" stroke="#dcdcdc" stroke-width="1"/>
<line x1="65" y1="709.4" x2="68" y2="709.4" stroke="#dcdcdc" stroke-width="1"/>
<line x1="52" y1="716.5" x2="68" y2="716.5" stroke="#dcdcdc" stroke-width="1"/>
<text transform="translate(59.7,719.0) rotate(-90)" text-anchor="end" font-size="8.5" fill="#555">11</text>
<line x1="65" y1="723.6" x2="68" y2="723.6" stroke="#dcdcdc" stroke-width="1"/>
<line x1="63.5" y1="730.6" x2="68" y2="730.6" stroke="#dcdcdc" stroke-width="1"/>
<line x1="65" y1="737.7" x2="68" y2="737.7" stroke="#dcdcdc" stroke-width="1"/>
<line x1="61" y1="744.8" x2="68" y2="744.8" stroke="#dcdcdc" stroke-width="1"/>
<line x1="65" y1="751.8" x2="68" y2="751.8" stroke="#dcdcdc" stroke-width="1"/>
<line x1="63.5" y1="758.9" x2="68" y2="758.9" stroke="#dcdcdc" stroke-width="1"/>
<line x1="65" y1="765.9" x2="68" y2="765.9" stroke="#dcdcdc" stroke-width="1"/>
<line x1="52" y1="773.0" x2="68" y2="773.0" stroke="#dcdcdc" stroke-width="1"/>
<text transform="translate(59.7,775.5) rotate(-90)" text-anchor="end" font-size="8.5" fill="#555">12</text>
<line x1="65" y1="780.1" x2="68" y2="780.1" stroke="#dcdcdc" stroke-width="1"/>
<line x1="63.5" y1="787.1" x2="68" y2="787.1" stroke="#dcdcdc" stroke-width="1"/>
<line x1="65" y1="794.2" x2="68" y2="794.2" stroke="#dcdcdc" stroke-width="1"/>
<rect x="51" y="77.500" width="17.500" height="17.500" fill="#f2f2f2"/>
<!-- v scrollbar -->
<rect x="1249.700" y="76" width="13" height="724" fill="#f3f3f3"/>
<rect x="1262.700" y="76" width="3.300" height="734" fill="#f7f7f7"/>
<rect x="1250.700" y="90" width="11.300" height="34.700" fill="#b9b9b9"/>
<path d="M1253.400 85.400l2.900-3l2.900 3z" fill="#555"/>
<path d="M1253.500 790.800l2.900 3.100l2.900-3.100z" fill="#444"/>
<!-- h scrollbar -->
<rect x="51" y="799.500" width="1215" height="10.500" fill="#ececec"/>
<rect x="64.200" y="800.300" width="98.600" height="9.700" fill="#b9b9b9"/>
<path d="M59.300 803l-3.200 2.900l3.200 2.900z" fill="#555"/>
<path d="M1241.400 803.100l3.300 2.900l-3.300 2.900z" fill="#444"/>
<rect x="1249.700" y="799.500" width="13" height="10.500" fill="#dcdcdc"/>
<!-- cursor -->
<path d="M595.400 284.600v11.200l2.600-2.200l2 4l1.800-.9l-1.900-3.900l3.500-.3z" fill="#0c0c0c" stroke="#fff7c0" stroke-width=".5"/>
</svg>

<!-- top bar -->
<div id="topbar" class="abs">
  <svg class="abs" style="left:13px;top:11px" width="20" height="14" viewBox="0 0 20 14"><path d="M1 2h18M1 7h18M1 12h18" stroke="#f0f0f0" stroke-width="2.100" stroke-linecap="round"/></svg>
  <div class="t" style="left:51px">Canvas</div>
  <div class="t" style="left:594px;font-size:13.500px">Untitled*</div>
  <svg class="abs" style="left:1124px;top:9px" width="18" height="20" viewBox="0 0 18 20"><path d="M9 2.2c-3 0-4.8 2.2-4.8 5.2v3.2l-1.7 2.6v.8h13v-.8l-1.700-2.600V7.400c0-3-1.800-5.200-4.800-5.200z" fill="none" stroke="#fff" stroke-width="1.4" stroke-linejoin="round"/><path d="M7.200 15.500a1.900 1.900 0 0 0 3.600 0" fill="none" stroke="#fff" stroke-width="1.4"/></svg>
  <div class="t" style="left:1162px">My Projects</div>
  <div class="t" style="left:1245px">Save</div>
  <div class="t" style="left:1289px;font-size:12px">|</div>
  <div class="t" style="left:1316px">Maker</div>
  <svg class="abs" style="left:1359px;top:14px" width="12" height="8" viewBox="0 0 12 8"><path d="M1.200 1.500l4.800 4.800l4.800-4.800" fill="none" stroke="#fff" stroke-width="1.400"/></svg>
  <div id="makeit">Make It</div>
</div>

<!-- sidebar -->
<div id="sidebar" class="abs">
<!-- coordinates relative to sidebar top (37) -->
<svg class="abs" style="left:0;top:0" width="51" height="773" viewBox="0 37 51 773" fill="none" stroke="#3a3a3a" stroke-width="1.2" stroke-linecap="round" stroke-linejoin="round">
<!-- New -->
<circle cx="23.600" cy="55.600" r="7.500" stroke-width="1.500"/><path d="M19.400 55.600h8.400M23.600 51.400v8.400" stroke-width="1.500"/>
<!-- Templates (t-shirt) -->
<path d="M20.600 102.900l-4.300 2.300l1.400 3.400l2-.8v9.500h8v-9.500l2 .8l1.400-3.400l-4.300-2.300c-.5 1.100-1.600 1.700-3.100 1.700s-2.600-.6-3.100-1.700z" fill="#ededed" stroke-width="1.400"/>
<path d="M22 107.300v.1M25.400 107.300v.1M22 110.300v.1M25.400 110.300v.1" stroke-width="1" stroke="#666"/>
<!-- Projects (card) -->
<path d="M18.200 161.500a1.500 1.500 0 0 1 1-1.400l6.200-2.500a.8.800 0 0 1 1 .3l2 2.200a1.500 1.500 0 0 1 .4 1v10.400a1.500 1.500 0 0 1-1.500 1.500h-7.600a1.500 1.500 0 0 1-1.500-1.500z" stroke-width="1.500"/>
<path d="M18.500 160.800h7.500l.3-2.600" stroke-width="1"/>
<path d="M23.500 167.700c-1.500-1.100-2.600-2-2.600-3.200c0-.8.600-1.400 1.400-1.400c.5 0 .9.200 1.200.7c.3-.5.700-.7 1.200-.7c.8 0 1.400.6 1.400 1.400c0 1.200-1.100 2.100-2.600 3.200z" stroke-width="1"/>
<path d="M21.400 170.200h4.200" stroke-width="1.500"/>
<!-- Shapes -->
<path d="M21.700 213.300l5.500 8.900h-11z" stroke-width="1.400"/><circle cx="26.200" cy="223.100" r="4.600" stroke-width="1.400"/>
<!-- Images (balloon) -->
<path d="M23.400 267.900c3.100 0 5.200 2.200 5.200 5.100c0 1.800-.8 3.400-1.900 4.900l-1.500 4.900h-3.600l-1.500-4.900c-1.100-1.500-1.900-3.100-1.900-4.900c0-2.900 2.100-5.100 5.200-5.100z" stroke-width="1.400"/>
<path d="M23.400 268.200c-1.700 1.100-2.300 2.800-2.300 4.800s.5 3.200 1 4.600M23.400 268.200c1.700 1.100 2.300 2.800 2.300 4.800s-.5 3.200-1 4.600M19.500 277.600h7.800M21.700 279.600l1.700 2.200l1.700-2.200" stroke-width="1"/>
<!-- Text (serif T) -->
<path d="M18.300 328v-2.500h10.400v2.500M23.500 325.500v9.700M20.900 335.200h5.200" stroke-width="1.700"/>
<!-- Phrases (speech bubble) -->
<path d="M23.500 378.300c4.300 0 7.300 2.700 7.300 6.200c0 1.700-.7 3.200-1.900 4.300l.6 2.600l-3-1.200c-.9.300-1.900.5-3 .5c-4.300 0-7.300-2.700-7.300-6.200s3-6.200 7.300-6.200z" stroke-width="1.400"/>
<path d="M20 383.200h7M20 386h7" stroke-width="1.300"/>
<!-- Editable images -->
<path d="M19.200 435.500v5.200h10v-9.700h-5" stroke-width="1.400"/>
<circle cx="19.200" cy="440.700" r="1.400" fill="#3a3a3a" stroke-width=".8"/><circle cx="29.200" cy="440.700" r="1.400" fill="#3a3a3a" stroke-width=".8"/><circle cx="29.200" cy="431" r="1.400" fill="#3a3a3a" stroke-width=".8"/>
<path d="M19.700 426.600l1.200 3.300l3.300 1.200l-3.300 1.200l-1.200 3.300l-1.200-3.300l-3.300-1.200l3.300-1.200z" fill="#2e2e2e" stroke-width=".5"/>
<!-- Upload -->
<path d="M17.500 488.500h12" stroke-width="1.400"/><path d="M23.500 500.500v-8.500M19.700 495.600l3.800-3.800l3.800 3.800" stroke-width="1.400"/>
<!-- Monogram -->
<path d="M16 546.300h15M16 548h15" stroke-width=".9"/>
<path d="M17 559v-9h5.500v9M19.700 550v9" stroke-width="1.200"/>
<path d="M30.300 552.200v-2.200h-5v9h5v-4.200h-2.600" stroke-width="1.200"/>
</svg>
<div class="sb" style="top:31px">New</div>
<div class="sb" style="top:86px">Templates</div>
<div class="sb" style="top:141px">Projects</div>
<div class="sb" style="top:196px">Shapes</div>
<div class="sb" style="top:251px">Images</div>
<div class="sb" style="top:305px">Text</div>
<div class="sb" style="top:360px">Phrases</div>
<div class="sb" style="top:412px">Editable<br>Images</div>
<div class="sb" style="top:470px">Upload</div>
<div class="sb" style="top:525px">Monogram</div>

</div>

<!-- toolbar -->
<div id="toolbar" class="abs">
<!-- coordinates in page space via inner wrapper offset -->
<div style="position:absolute;left:-51px;top:-37px;width:1500px;height:810px">

<div class="sep" style="left:122px"></div>
<div class="sep" style="left:230px"></div>
<div class="sep" style="left:321px"></div>
<div class="sep" style="left:440px"></div>
<div class="sep" style="left:486px"></div>
<div class="sep" style="left:631px"></div>
<div class="sep" style="left:719px"></div>
<div class="tl" style="left:135px;top:43px">Operation</div>
<div class="inp" style="left:135px;width:65px"></div>
<div class="inl" style="left:140px">Basic Cut</div>
<div class="inp" style="left:205px;width:15px;border-color:#f3f3f3"></div>
<div class="tl" style="left:243px;top:43px;color:#3c3c3c;font-size:8.200px">Select All</div>
<div class="tl" style="left:292px;top:43px">Edit</div>
<div class="tl" style="left:335.500px;top:43px">Align</div>
<div class="tl" style="left:367px;top:43px">Arrange</div>
<div class="tl" style="left:412px;top:43px">Flip</div>
<div class="tl" style="left:452px;top:43px">Offset</div>
<div class="tl" style="left:498px;top:43px">Size</div>
<div class="inl" style="left:499px">W</div>
<div class="inp" style="left:510px;width:44px"></div><div class="inl" style="left:515px;color:#e2e2e2">0</div>
<div class="inl" style="left:568px">H</div>
<div class="inp" style="left:576px;width:44px"></div><div class="inl" style="left:581px;color:#e2e2e2">0</div>
<div class="tl" style="left:644px;top:43px">Rotate</div>
<div class="inp" style="left:664px;width:43px"></div><div class="inl" style="left:669px;color:#e2e2e2">0</div>
<div class="tl" style="left:732px;top:43px">Position</div>
<div class="inl" style="left:734px">X</div>
<div class="inp" style="left:742px;width:42px"></div><div class="inl" style="left:747px;color:#e2e2e2">0</div>
<div class="inl" style="left:795px">Y</div>
<div class="inp" style="left:803px;width:43px"></div><div class="inl" style="left:808px;color:#e2e2e2">0</div>
<svg class="abs" style="left:0;top:0" width="1500" height="810" viewBox="0 0 1500 810" fill="none" stroke-linecap="round" stroke-linejoin="round">
<!-- undo -->
<path d="M68.600 56.200h7a3.650 3.650 0 0 1 0 7.300h-5.700" stroke="#2a2a2a" stroke-width="1.600"/>
<path d="M64.900 56.200l3.900-3v6z" fill="#1a1a1a" stroke="none"/>
<!-- redo -->
<path d="M105.200 56.200h-7a3.650 3.650 0 0 0 0 7.300h5.700" stroke="#cfcfcf" stroke-width="1.400"/>
<path d="M108.900 56.200l-3.900-3v6z" fill="#cfcfcf" stroke="none"/>
<!-- slash swatch -->
<path d="M207 68.500l11.500-11.500" stroke="#ee8f86" stroke-width="1.300"/>
<!-- select all icon -->
<rect x="253.300" y="56.700" width="13.600" height="13.600" rx="4.500" stroke="#2e2e2e" stroke-width="1.500" stroke-dasharray="2.300 2.430" stroke-dashoffset="1.100" stroke-linecap="butt"/>
<g fill="#2e2e2e" stroke="none"><circle cx="257.600" cy="61" r="1.450"/><circle cx="262.400" cy="61" r="1.450"/><circle cx="257.600" cy="65.900" r="1.450"/><path d="M261.200 64.300l4.300 1.900l-3 2z"/></g>
<!-- edit pencil -->
<path d="M291.500 68.600l.9-3.400l6.800-6.800l2.500 2.500l-6.800 6.800z" stroke="#cbcbcb" stroke-width="1.150"/>
<!-- align -->
<path d="M336.800 58v10.500" stroke="#cbcbcb" stroke-width="1.200"/><rect x="339.500" y="60.500" width="7.500" height="5" rx="1" stroke="#cbcbcb" stroke-width="1.200"/>
<!-- arrange -->
<rect x="372.500" y="57.500" width="7" height="7" rx="1.200" stroke="#cbcbcb" stroke-width="1.200"/><path d="M381.500 61.500h2a1.200 1.200 0 0 1 1.200 1.200v5.600a1.200 1.200 0 0 1-1.200 1.200h-5.600a1.200 1.200 0 0 1-1.200-1.200v-2" stroke="#cbcbcb" stroke-width="1.200"/>
<!-- flip -->
<path d="M414 57.500l-4.300 11.800h4.300zM416.800 57.500l4.300 11.800h-4.300z" stroke="#cbcbcb" stroke-width="1.150"/>
<!-- offset -->
<circle cx="460" cy="63.500" r="3.300" stroke="#cbcbcb" stroke-width="1.200"/><circle cx="460" cy="63.500" r="6.300" stroke="#cfcfcf" stroke-width="1" stroke-dasharray="1.300 2"/>
<!-- lock -->
<rect x="564" y="49.500" width="6.500" height="5.500" rx="1" stroke="#cbcbcb" stroke-width="1.150"/><path d="M565.400 49.500v-1.600a1.850 1.850 0 0 1 3.700 0v1.600" stroke="#cbcbcb" stroke-width="1.150"/>
<path d="M556 52.500h4M574.500 52.500h3" stroke="#e6e6e6" stroke-width="1"/>
<!-- rotate -->
<path d="M646.300 62a5.600 5.600 0 0 1 10.200-2.300M657.700 65a5.600 5.600 0 0 1-10.200 2.300" stroke="#cfcfcf" stroke-width="1.200"/>
<path d="M657 56.800v3.200h-3.200M647 70.200v-3.200h3.200" stroke="#cfcfcf" stroke-width="1.200"/>
<!-- carets -->
<g fill="#b4b4b4" stroke="none">
<path d="M191.60 61.60h4.8l-2.4 3.2z"/>
<path d="M305.50 61.80h4.8l-2.4 3.2z"/>
<path d="M350.90 61.80h4.8l-2.4 3.2z"/>
<path d="M387.50 61.80h4.8l-2.4 3.2z"/>
<path d="M424.30 61.80h4.8l-2.4 3.2z"/>
<path d="M469.80 61.80h4.8l-2.4 3.2z"/>
</g>
<!-- spinners -->
<g fill="#8e8e8e" stroke="none">
<path d="M546.600 61.400l1.800-2.600l1.800 2.600zM546.600 63.600l1.800 2.600l1.800-2.600z"/>
<path d="M613 61.400l1.800-2.600l1.800 2.600zM613 63.600l1.800 2.600l1.800-2.600z"/>
<path d="M700.600 61.400l1.800-2.600l1.800 2.600zM700.600 63.600l1.800 2.600l1.800-2.600z"/>
<path d="M777.900 61.400l1.800-2.600l1.800 2.600zM777.900 63.600l1.800 2.600l1.800-2.600z"/>
<path d="M839.200 61.400l1.800-2.600l1.800 2.600zM839.200 63.600l1.800 2.600l1.800-2.600z"/>
</g>
</svg>
</div>

</div>

<!-- right panel -->
<div id="panel" class="abs">
<!-- coordinates in page space via wrapper offset -->
<div style="position:absolute;left:-1266px;top:-37px;width:1500px;height:810px">
<div class="abs" style="left:1279px;top:47px;font-size:10.600px;font-weight:bold;color:#1f7a58;line-height:16px">Layers</div>
<div class="abs" style="left:1338px;top:47px;font-size:11.500px;color:#555;line-height:16px">Color Sync</div>
<div class="abs" style="left:1266px;top:75.500px;width:234px;height:1px;background:#ececec"></div>
<div class="abs" style="left:1266px;top:72.300px;width:59px;height:2.400px;background:#1f7a58"></div>
<div class="lyr" style="left:1266px;top:113px;height:47.500px"><span style="top:16px">Heart</span></div>
<div class="lyr" style="left:1266px;top:161.500px;height:42.500px"><span style="top:12.500px">Circle</span></div>
<div class="abs" style="left:1488px;top:113px;width:12px;height:581px;background:#f1f1f1"></div>
<svg class="abs" style="left:0;top:0" width="1500" height="810" viewBox="0 0 1500 810" fill="none" stroke-linecap="round" stroke-linejoin="round">
<!-- layer action icons -->
<g stroke="#e4e4e4" stroke-width="1.300">
<path d="M1280.800 89.500v-1.200a1.600 1.600 0 0 1 1.600-1.600h1.400M1292.200 86.700h1.400a1.600 1.600 0 0 1 1.600 1.600v1.200M1295.200 98.500v1.200a1.600 1.600 0 0 1-1.600 1.600h-1.400M1283.800 101.300h-1.400a1.600 1.600 0 0 1-1.600-1.600v-1.200"/>
<circle cx="1286.800" cy="92.800" r="3.300"/><rect x="1286" y="92" width="5.800" height="5.800" rx="1.200"/>
<rect x="1316.300" y="90.300" width="10.500" height="11" rx="1.500"/><path d="M1314.200 97.800h-.4a1.500 1.500 0 0 1-1.500-1.500v-8a1.500 1.500 0 0 1 1.500-1.500h7.500a1.500 1.500 0 0 1 1.500 1.500v.4"/><path d="M1321.500 93.300v5M1319 95.800h5"/>
<path d="M1343.800 89.500h14.400M1348 89.300v-1.300a1.200 1.200 0 0 1 1.200-1.200h3.600a1.200 1.200 0 0 1 1.200 1.200v1.300M1345.300 89.700l.8 10.300a1.500 1.500 0 0 0 1.500 1.400h6.800a1.500 1.500 0 0 0 1.500-1.400l.8-10.300M1349.300 92.800v5.400M1352.700 92.800v5.400"/>
</g>
<!-- heart + circle swatches -->
<path d="M1303.600 145.500c-4.800-3.600-9.600-6.800-9.600-11.200c0-3 2.300-5.300 5-5.300c1.900 0 3.600 1.100 4.600 3c1-1.900 2.700-3 4.600-3c2.700 0 5 2.300 5 5.300c0 4.400-4.800 7.600-9.600 11.200z" fill="#fde87a" stroke="none"/>
<circle cx="1303.600" cy="182.900" r="9.600" fill="#fde87a" stroke="none"/>
<!-- panel scroll arrows -->
<path d="M1491.200 122.500l3-3.200l3 3.200z" fill="#555" stroke="none"/>
<path d="M1491.200 684l3 3.200l3-3.200z" fill="#555" stroke="none"/>
<!-- bottom action icons -->
<g stroke="#bfbfbf" stroke-width="1.350">
<path d="M1287.400 747.600a4.700 4.700 0 1 1 2.600-4.100"/><path d="M1286.300 743.500h7.700v7.500h-7.700z"/><path d="M1286.300 746.500l3.500-3" stroke-width="1.100"/>
<rect x="1315.300" y="738.700" width="9" height="8.600" rx="1.200"/><circle cx="1324.200" cy="746.800" r="4.600"/>
<path d="M1364.500 747h8a2.200 2.200 0 0 0 0-4.400h-8.700a3.500 3.500 0 0 0 0 7h9.200a3.500 3.500 0 0 0 3.300-2.400" stroke-width="1.300"/>
<path d="M1404.800 737.300v5.200M1402.300 740.300l2.500 2.400l2.500-2.400M1398.300 743.200l6.500 3.800l6.500-3.800M1398.300 747.200l6.500 3.800l6.500-3.800"/>
<circle cx="1445.300" cy="745.300" r="7.500" stroke-dasharray="3 1.710" stroke-width="1.600" stroke-linecap="butt"/>
</g>
<path d="M1334 743.400h5l-2.500 3.100z" fill="#b4b4b4" stroke="none"/>
</svg>
<div class="abs" style="left:1266px;top:694px;width:234px;height:40px;background:#f1f1f1"></div>
<div class="abs" style="left:1274px;top:699.500px;width:42px;height:28.500px;background:#fff;border:1px solid #9c9c9c;border-radius:2px"></div>
<div class="abs" style="left:1323px;top:708.500px;font-size:8px;color:#3a3a3a;line-height:10px">Blank Canvas</div>
<div class="act" style="left:1265.500px">Slice</div>
<div class="act" style="left:1304px">Combine</div>
<div class="act" style="left:1345.500px">Attach</div>
<div class="act" style="left:1382.800px">Flatten</div>
<div class="act" style="left:1423px">Contour</div>
<div class="abs" style="left:1266px;top:771.500px;width:234px;height:38.500px;background:#0738b7"></div>
<svg class="abs" style="left:1276px;top:781px" width="30" height="26" viewBox="0 0 30 26"><path d="M2.600 1.700h25.200l-5.300 16.700h-16.800l-2.300 4.200l-.8-4.200z" fill="#10a55c"/><text x="13.300" y="14.500" text-anchor="middle" font-family="Liberation Sans, sans-serif" font-weight="bold" font-size="15.500" fill="#c9f7df">a</text></svg>
<div class="abs" style="left:1310px;top:784px;font-size:12px;font-weight:bold;color:#fff;line-height:16px;white-space:nowrap;transform:scaleX(.868);transform-origin:0 0">Want £10 + FREE shipping?</div>
</div>

</div>

<!-- zoom control -->
<div class="abs" style="left:99px;top:766.500px;width:67px;height:26px;border-radius:5px;background:rgba(235,235,235,.8)"></div>
<div class="abs" style="left:111.500px;top:770px;font-size:15.500px;line-height:19px;color:#c6c6c6;letter-spacing:-.2px">00%</div>
<svg class="abs" style="left:147px;top:770.500px" width="19" height="19" viewBox="0 0 19 19"><circle cx="9.400" cy="9.300" r="7.600" fill="none" stroke="#c2c2c2" stroke-width="1.300"/><path d="M5.400 9.300h8M9.400 5.300v8" stroke="#c2c2c2" stroke-width="1.300"/></svg>

<!-- logo -->
<svg class="abs" style="left:8px;top:688px" width="136" height="108" viewBox="8 688 136 108">
<ellipse cx="75.100" cy="742" rx="64.200" ry="49.500" fill="#c8371c"/>
<g fill="#fff" font-family="Liberation Serif, serif" font-style="italic" font-weight="bold">
<text x="31" y="740" font-size="33" textLength="64" lengthAdjust="spacingAndGlyphs">Craft</text>
<text x="42" y="771.500" font-size="29" textLength="74" lengthAdjust="spacingAndGlyphs">Sarah</text>
<text x="100.800" y="733.200" font-size="8.600" font-style="normal" textLength="26.500" lengthAdjust="spacingAndGlyphs">WITH</text>
</g>
<g fill="none" stroke="#fff" stroke-linecap="round">
<path d="M101.500 739.500c3-3.500 8-3.200 12-2.200s9 1 13.500-2.300" stroke-width="1.500"/>
<path d="M44 716c-5-5-14-5-17 0s1 9 5 6" stroke-width="1.300"/>
<path d="M84 722c3-7 8-9 9-6" stroke-width="1.300"/>
<path d="M78 747c-1 4-5 5-7 2" stroke-width="1.200"/>
<path d="M48 760c-6-2-13 1-13 7s5 10 10 9s4-6 1-6" stroke-width="1.200"/>
<path d="M103 757c3-8 12-13 17-10s2 9-4 10s-14-4-22-7s-10 3-6 5" stroke-width="1.200"/>
</g>
</svg>

</div>
</body>
</html>
